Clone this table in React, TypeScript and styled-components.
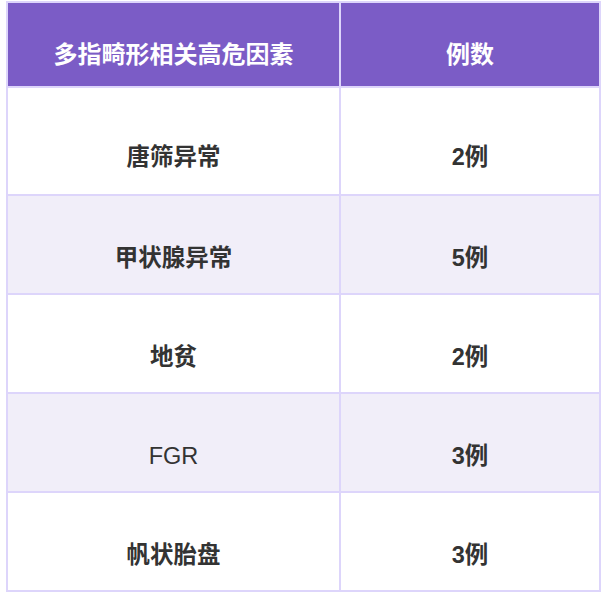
import React from 'react';
import styled, { createGlobalStyle } from 'styled-components';

const GlobalStyle = createGlobalStyle`
    html, body {
        margin: 0;
        padding: 0;
        background: #ffffff;
    }
`;

const Page = styled.div`
    padding: 1px 6px;
    font-family: "Liberation Sans", "Noto Sans CJK SC", sans-serif;
`;

const Table = styled.div`
    display: grid;
    grid-template-columns: 333px 260px;
    grid-template-rows: 85px 108px repeat(4, 99px);
    width: 595px;
    border-top: 2px solid #ddd5fb;
    border-left: 2px solid #ddd5fb;
    box-sizing: border-box;
`;

const Cell = styled.div<{ $header?: boolean; $striped?: boolean; $top: number; $light?: boolean }>`
    box-sizing: border-box;
    border-right: 2px solid #ddd5fb;
    border-bottom: 2px solid #ddd5fb;
    padding-top: ${({ $top }) => $top}px;
    text-align: center;
    font-size: ${({ $header }) => ($header ? 24 : 23.5)}px;
    line-height: 24px;
    font-weight: ${({ $light }) => ($light ? 500 : 700)};
    color: ${({ $header }) => ($header ? '#ffffff' : '#333333')};
    background: ${({ $header, $striped }) =>
        $header ? '#7b5cc6' : $striped ? '#f1eef9' : '#ffffff'};
`;

const rows = [
    { factor: '唐筛异常', count: '2例' },
    { factor: '甲状腺异常', count: '5例' },
    { factor: '地贫', count: '2例' },
    { factor: 'FGR', count: '3例' },
    { factor: '帆状胎盘', count: '3例' },
];

const App: React.FC = () => {
    return (
        <>
            <GlobalStyle />
            <Page>
                <Table>
                    <Cell $header $top={40}>多指畸形相关高危因素</Cell>
                    <Cell $header $top={40}>例数</Cell>
                    {rows.map((row, i) => (
                        <React.Fragment key={row.factor}>
                            <Cell $striped={i % 2 === 1} $top={i === 0 ? 57 : 50} $light={row.factor === 'FGR'}>
                                {row.factor}
                            </Cell>
                            <Cell $striped={i % 2 === 1} $top={i === 0 ? 57 : 50}>
                                {row.count}
                            </Cell>
                        </React.Fragment>
                    ))}
                </Table>
            </Page>
        </>
    );
};

export default App;
